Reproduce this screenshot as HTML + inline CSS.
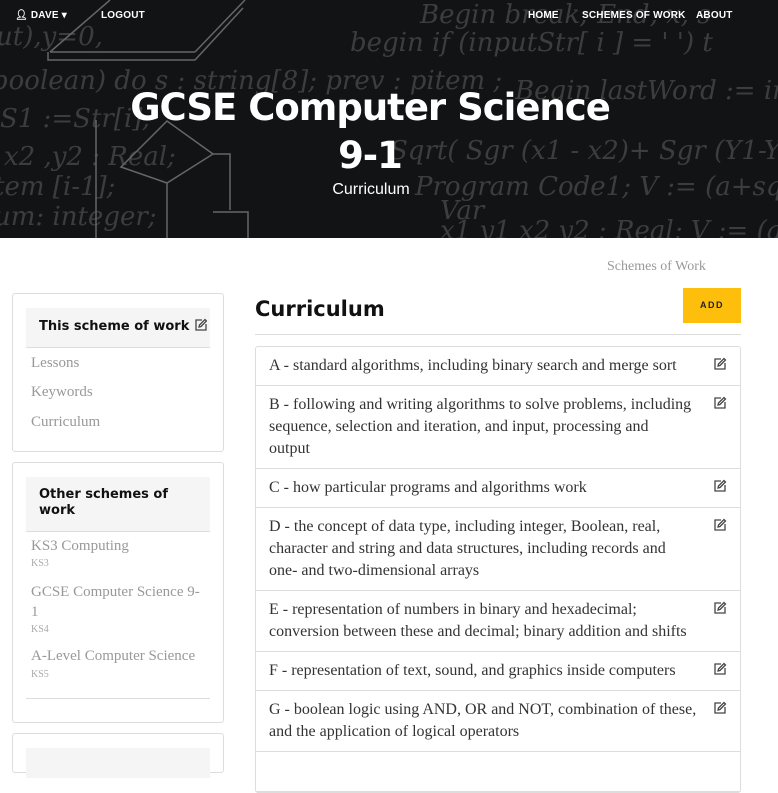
<!DOCTYPE html>
<html><head><meta charset="utf-8"><style>
*{box-sizing:border-box;margin:0;padding:0}
body{width:778px;height:756px;overflow:hidden;background:#fff;font-family:"Liberation Serif",serif;color:#333;position:relative}
.hero{position:absolute;left:0;top:0;width:778px;height:238px;background:#121314;overflow:hidden}
.bg{position:absolute;color:#5a5a5a;font-family:"DejaVu Serif",serif;font-style:italic;font-size:26px;white-space:nowrap;opacity:.6}
.nav{position:absolute;top:10px;color:#fff;font-family:"Liberation Sans",sans-serif;font-weight:bold;font-size:10px;letter-spacing:.2px}
h1{position:absolute;left:0;width:740px;top:84px;text-align:center;color:#fff;font-family:"DejaVu Sans",sans-serif;font-weight:bold;font-size:37px;line-height:48px;letter-spacing:-1px}
.sub{position:absolute;left:0;width:742px;top:181px;text-align:center;color:#fff;font-family:"Liberation Sans",sans-serif;font-size:16px}
.box{position:absolute;left:12px;width:212px;border:1px solid #ddd;border-radius:3px;background:#fff}
.bh{position:absolute;left:13px;width:184px;background:#f5f5f5;border-bottom:1px solid #ddd;font-family:"DejaVu Sans",sans-serif;font-weight:bold;font-size:13px;color:#111;padding:0 13px;white-space:nowrap}
.lk{position:absolute;left:18px;color:#999;font-size:15px;white-space:nowrap}
.ks{position:absolute;left:18px;color:#aaa;font-size:10px}
.list{position:absolute;left:255px;top:346px;width:486px;border:1px solid #ddd;border-radius:3px}
.it{border-bottom:1px solid #ddd;padding:8px 13px 8px;font-size:16px;line-height:22px;white-space:nowrap;position:relative;color:#333}
.ed{position:absolute;right:13px;top:10px;width:14px;height:14px}
</style></head><body>
<div class="hero">
<div class="bg" style="left:-4px;top:22px">ut),y=0,</div>
<div class="bg" style="left:-8px;top:66px">boolean) do s : string[8]; prev : pitem ;</div>
<div class="bg" style="left:0;top:104px">S1 :=Str[i];</div>
<div class="bg" style="left:4px;top:142px">x2 ,y2 : Real;</div>
<div class="bg" style="left:-6px;top:172px">tem [i-1];</div>
<div class="bg" style="left:-6px;top:202px">um: integer;</div>
<div class="bg" style="left:420px;top:0px">Begin   break;  End, x, s</div>
<div class="bg" style="left:350px;top:28px">begin   if (inputStr[ i ] =  ' ') t</div>
<div class="bg" style="left:515px;top:76px">Begin lastWord := inpu</div>
<div class="bg" style="left:390px;top:136px">Sqrt( Sgr (x1 - x2)+ Sgr (Y1-Y2))</div>
<div class="bg" style="left:415px;top:172px">Program Code1; V := (a+sqrt(abs</div>
<div class="bg" style="left:440px;top:196px">Var</div>
<div class="bg" style="left:440px;top:216px">x1 y1 x2 y2 : Real; V := (a + sq</div>
<svg style="position:absolute;left:0;top:0" width="778" height="238"><g fill="none" stroke="#666" stroke-width="1.5">
<path d="M50 52 L110 0 M50 52 L195 52 M195 52 L245 0 M48 52 L48 60 L195 60 L243 8"/>
<path d="M121 167 L167 121 L213 154 L167 183 Z"/><path d="M167 183 V238 M213 154 H230 V210 M213 212 H248 V238"/>
<path d="M96 120 V238"/></g></svg>
<div class="nav" style="left:15px">&#128100;&#xFE0E; DAVE ▾</div>
<div class="nav" style="left:101px">LOGOUT</div>
<div class="nav" style="left:528px">HOME</div>
<div class="nav" style="left:582px">SCHEMES OF WORK</div>
<div class="nav" style="left:696px">ABOUT</div>
<h1>GCSE Computer Science<br>9-1</h1>
<div class="sub">Curriculum</div>
</div>

<svg width="0" height="0" style="position:absolute"><defs><g id="e"><path d="M8 2 H2 V12 H12 V6" fill="none" stroke="#444" stroke-width="1.3"/><path d="M5 9 L5.5 7 L11 1.5 L12.5 3 L7 8.5 Z" fill="none" stroke="#444" stroke-width="1.3"/></g></defs></svg>

<div style="position:absolute;left:607px;top:259px;color:#999;font-size:14px">Schemes of Work</div>
<div style="position:absolute;left:255px;top:297px;font-family:'DejaVu Sans',sans-serif;font-weight:bold;font-size:21px;color:#111">Curriculum</div>
<div style="position:absolute;left:683px;top:288px;width:58px;height:35px;background:#fdbf0b;color:#222;font-family:'Liberation Sans',sans-serif;font-weight:bold;font-size:9px;letter-spacing:1.5px;text-align:center;line-height:35px">ADD</div>
<div style="position:absolute;left:255px;top:334px;width:486px;border-top:1px solid #ddd"></div>

<div class="box" style="top:293px;height:159px">
<div class="bh" style="top:14px;height:40px;line-height:38px">This scheme of work <svg width="13" height="13" style="vertical-align:-1px"><use href="#e"/></svg></div>
<div class="lk" style="top:61px">Lessons</div>
<div class="lk" style="top:90px">Keywords</div>
<div class="lk" style="top:120px">Curriculum</div>
</div>
<div class="box" style="top:462px;height:261px">
<div class="bh" style="top:14px;height:55px;padding-top:10px;line-height:16px">Other schemes of<br>work</div>
<div class="lk" style="top:75px">KS3 Computing</div><div class="ks" style="top:95px">KS3</div>
<div class="lk" style="top:121px">GCSE Computer Science 9-</div>
<div class="lk" style="top:141px">1</div><div class="ks" style="top:161px">KS4</div>
<div class="lk" style="top:185px">A-Level Computer Science</div><div class="ks" style="top:206px">KS5</div>
<div style="position:absolute;left:13px;width:184px;top:235px;border-top:1px solid #ddd"></div>
</div>
<div class="box" style="top:733px;height:40px"><div class="bh" style="top:14px;height:30px;border:0"></div></div>

<div class="list">
<div class="it">A - standard algorithms, including binary search and merge sort<svg class="ed"><use href="#e"/></svg></div>
<div class="it">B - following and writing algorithms to solve problems, including<br>sequence, selection and iteration, and input, processing and<br>output<svg class="ed"><use href="#e"/></svg></div>
<div class="it">C - how particular programs and algorithms work<svg class="ed"><use href="#e"/></svg></div>
<div class="it">D - the concept of data type, including integer, Boolean, real,<br>character and string and data structures, including records and<br>one- and two-dimensional arrays<svg class="ed"><use href="#e"/></svg></div>
<div class="it">E - representation of numbers in binary and hexadecimal;<br>conversion between these and decimal; binary addition and shifts<svg class="ed"><use href="#e"/></svg></div>
<div class="it">F - representation of text, sound, and graphics inside computers<svg class="ed"><use href="#e"/></svg></div>
<div class="it">G - boolean logic using AND, OR and NOT, combination of these,<br>and the application of logical operators<svg class="ed"><use href="#e"/></svg></div>
<div class="it" style="height:40px"></div>
</div>
</body></html>
